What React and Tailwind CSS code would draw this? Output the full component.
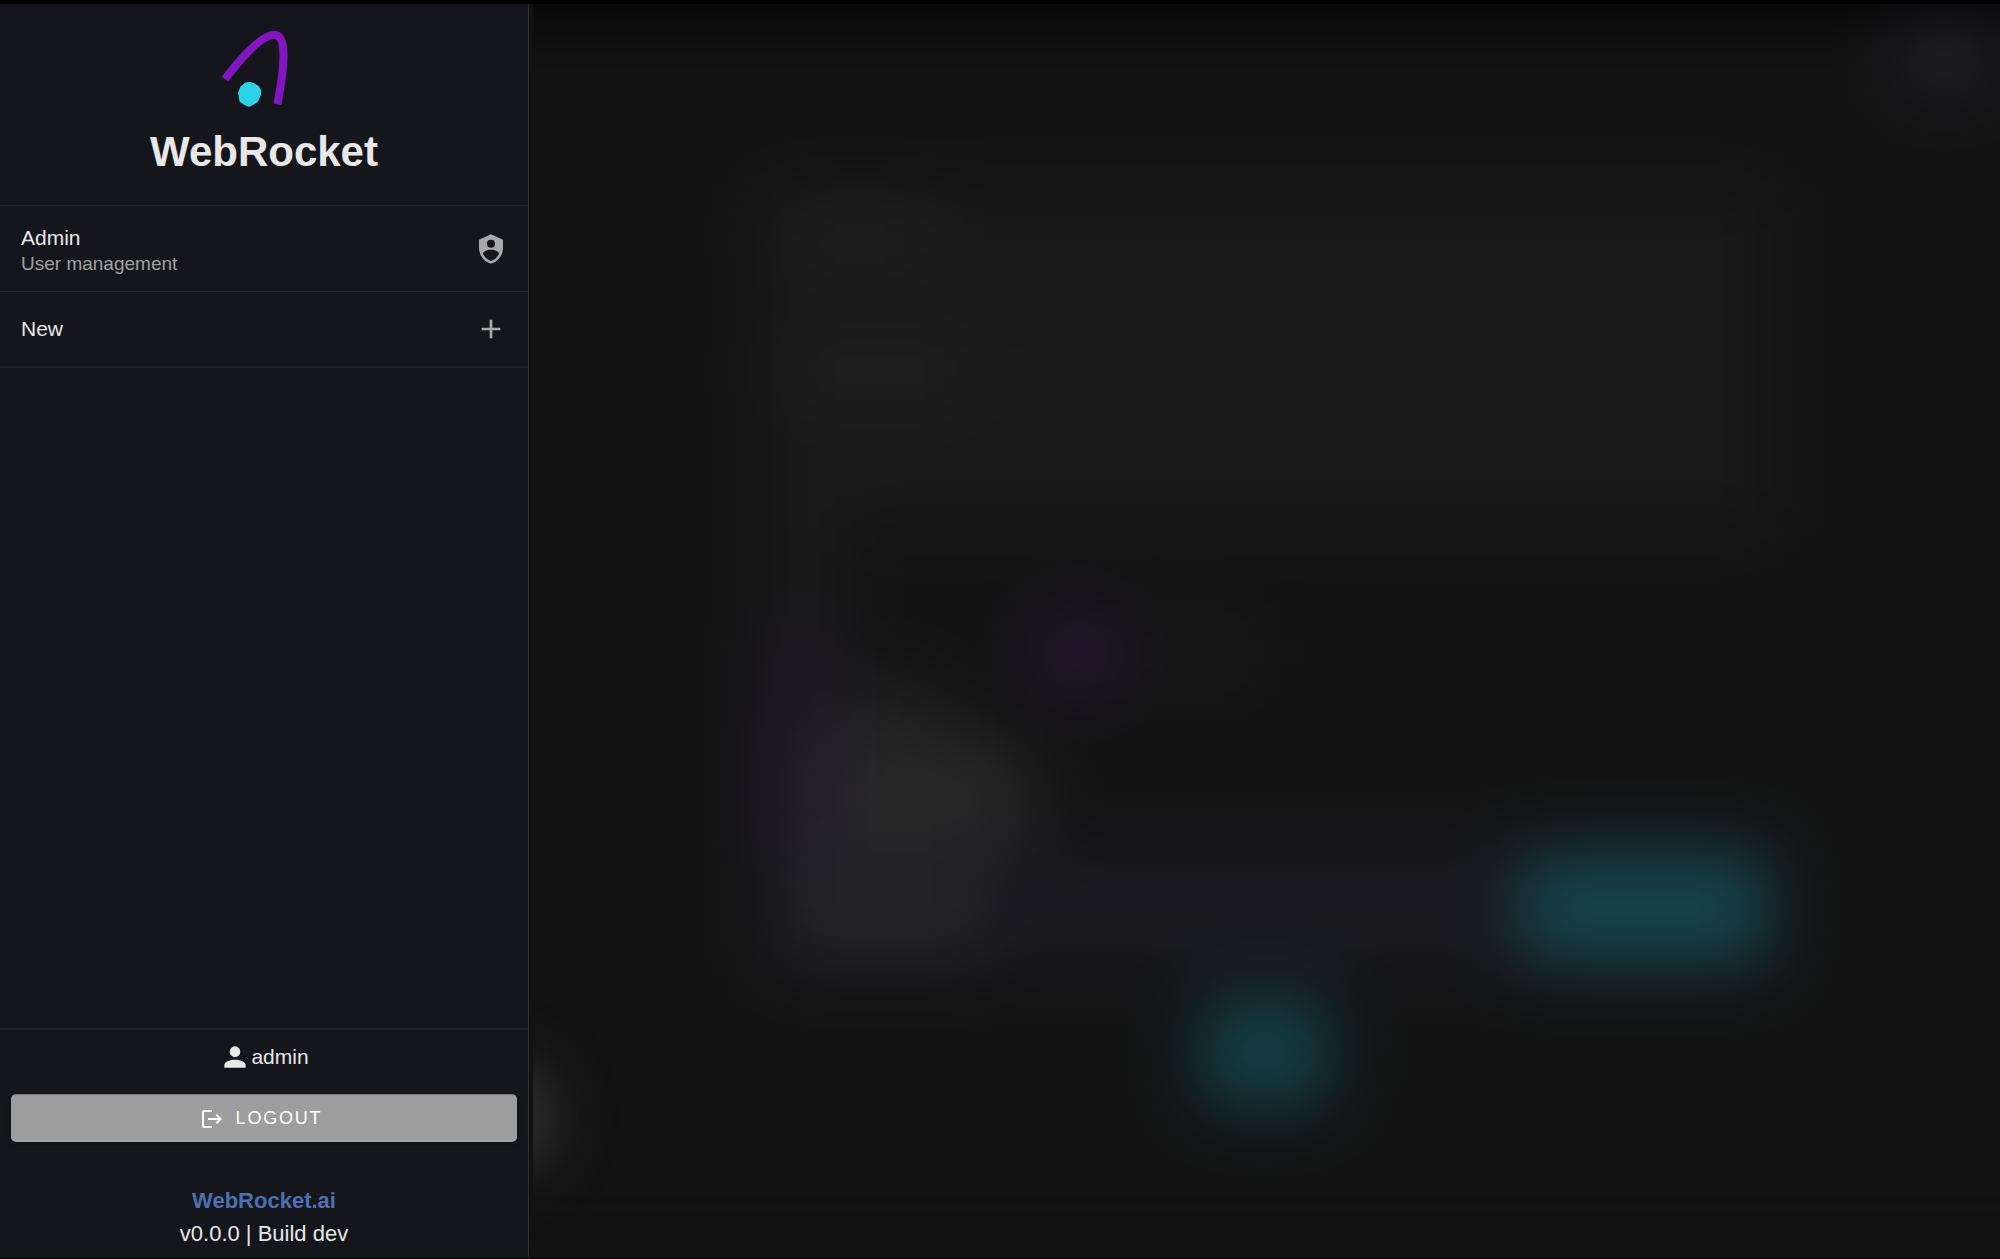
import React from "react";

const mdiPaths = {
  shieldAccount:
    "M12,1L3,5V11C3,16.55 6.84,21.74 12,23C17.16,21.74 21,16.55 21,11V5L12,1M12,5A3,3 0 0,1 15,8A3,3 0 0,1 12,11A3,3 0 0,1 9,8A3,3 0 0,1 12,5M17.13,17C15.92,18.85 14.11,20.24 12,20.92C9.89,20.24 8.08,18.85 6.87,17C6.53,16.5 6.24,16 6,15.47C6,13.82 8.71,12.47 12,12.47C15.29,12.47 18,13.79 18,15.47C17.76,16 17.47,16.5 17.13,17Z",
  plus: "M19,13H13V19H11V13H5V11H11V5H13V11H19V13Z",
  account:
    "M12,4A4,4 0 0,1 16,8A4,4 0 0,1 12,12A4,4 0 0,1 8,8A4,4 0 0,1 12,4M12,14C16.42,14 20,15.79 20,18V20H4V18C4,15.79 7.58,14 12,14Z",
  logout:
    "M17 7L15.59 8.41L18.17 11H8V13H18.17L15.59 15.58L17 17L22 12M4 5H12V3H4C2.9 3 2 3.9 2 5V19C2 20.1 2.9 21 4 21H12V19H4V5Z",
};

const Icon = ({ name, className }) => (
  <svg viewBox="0 0 24 24" fill="currentColor" className={className} aria-hidden="true">
    <path d={mdiPaths[name]} />
  </svg>
);

const Logo = () => (
  <svg viewBox="276 90 252 234" className="h-[78px] w-[84px]" role="img" aria-label="WebRocket logo">
    <path
      d="M285 237C338 168 396 104 433 104C471 104 465 196 442 313"
      fill="none"
      stroke="#8415c4"
      strokeWidth="24"
    />
    <path
      d="M345 248Q358 244 371 249L385 257L393 270V284L384 305L370 314L357 321L343 314L329 305L324 278L331 260Z"
      fill="#2bd3e8"
    />
  </svg>
);

const NavItem = ({ title, subtitle, icon, className }) => (
  <li className={className}>
    <a href="#" className="flex h-full items-center justify-between px-[21px]">
      <span className={subtitle ? "flex flex-col pt-1" : "flex flex-col"}>
        <span className="text-[21px] leading-[26px]">{title}</span>
        {subtitle && (
          <span className="text-[19px] leading-[26px] text-[#a0a0a3]">{subtitle}</span>
        )}
      </span>
      <Icon name={icon} className="size-8 text-[#a9a9ac]" />
    </a>
  </li>
);

const Sidebar = () => (
  <aside className="z-10 flex w-[529px] shrink-0 flex-col border-r border-[#303035] bg-[#15161b] text-[#e8e8e8]">
    {/* brand */}
    <div className="flex flex-col items-center gap-5 pt-[26px] pb-[29px]">
      <Logo />
      <h1 className="text-[42px] leading-[48px] font-bold">WebRocket</h1>
    </div>

    {/* navigation */}
    <nav className="grow">
      <ul>
        <NavItem
          title="Admin"
          subtitle="User management"
          icon="shieldAccount"
          className="h-[86px] border-t border-[#212227]"
        />
        <NavItem
          title="New"
          icon="plus"
          className="h-[77px] border-t border-b-2 border-t-[#212227] border-b-[#1e1f24]"
        />
      </ul>
    </nav>

    {/* account */}
    <div className="border-t-2 border-[#1e1f24] px-[11px] pt-[11px]">
      <div className="flex items-center justify-center">
        <Icon name="account" className="size-8" />
        <span className="text-[21px] leading-[30px]">admin</span>
      </div>
      <button
        type="button"
        className="mt-[21px] flex h-12 w-full items-center justify-center gap-3 rounded-[5px] border-t border-[#77777a] bg-[#9e9e9e] text-[18px] tracking-widest text-white shadow-md"
      >
        <Icon name="logout" className="-ml-1.5 size-6" />
        LOGOUT
      </button>
    </div>
    <footer className="flex flex-col items-center pt-[42px] pb-2 text-[22px] leading-[33px]">
      <a href="#" className="font-bold text-[#4e70b0]">
        WebRocket.ai
      </a>
      <span>v0.0.0 | Build dev</span>
    </footer>
  </aside>
);

// page content behind the open drawer, out of focus
const Backdrop = () => (
  <main className="relative grow overflow-hidden bg-[#121212]" aria-hidden="true">
    <div className="-mx-24 flex min-h-full flex-col bg-[#121212] px-24 pb-24 blur-[34px]">
      <div className="-mx-20 -mt-20 h-[84px] bg-black" />
      <div className="flex justify-end">
        <div className="h-[90px] w-[110px] rounded-full bg-[#1f1f27]" />
      </div>

      <div className="mx-auto mt-[92px] flex w-[70%] max-w-[1010px] flex-col">
        <div className="flex flex-col gap-[80px] bg-[#191919] px-6 pt-4 pb-[132px]">
          <div className="h-14 w-[150px] bg-[#212121]" />
          <div className="h-14 w-[190px] bg-[#212121]" />
        </div>

        <div className="flex items-start">
          <div className="h-[94px] w-[90px] bg-[#191919]" />
          <div className="mt-[86px] ml-[182px] h-[76px] w-[90px] rounded-full bg-[#28183a]" />
          <div className="mt-[98px] ml-5 h-12 w-[110px] bg-[#191919]" />
        </div>

        <div className="-mt-[72px] flex h-[110px]">
          <div className="w-[80px] bg-[#1e1a24]" />
          <div className="w-[100px] self-end pt-12">
            <div className="h-[56px] bg-[#1e1e1e]" />
          </div>
        </div>
        <div className="flex h-[112px]">
          <div className="w-[70px] bg-[#231b2e]" />
          <div className="w-[210px] rounded-tr-[80px] bg-[#272727]" />
        </div>
        <div className="flex h-[132px] bg-[#19191f]">
          <div className="mb-3 ml-6 w-[200px] bg-[#232328]" />
          <div className="my-3 ml-auto h-[108px] w-[250px] rounded-[8px] bg-[#15444e]" />
        </div>

        <div className="mx-auto mt-[22px] h-[112px] w-[136px] rounded-[36px] bg-[#133f47]" />
      </div>
    </div>
    {/* floating action button */}
    <div className="absolute bottom-[86px] left-1 h-[110px] w-20">
      <div className="-ml-20 h-full w-[100px] rounded-full bg-[#333333] blur-[28px]" />
    </div>
    <div className="absolute inset-y-0 left-0 w-1 bg-[#111112]" />
  </main>
);

const App = () => (
  <div className="flex h-screen border-t-4 border-b border-t-black border-b-[#0b0b0d] bg-[#121212] font-['Liberation_Sans',Arial,sans-serif]">
    <Sidebar />
    <Backdrop />
  </div>
);

export default App;
